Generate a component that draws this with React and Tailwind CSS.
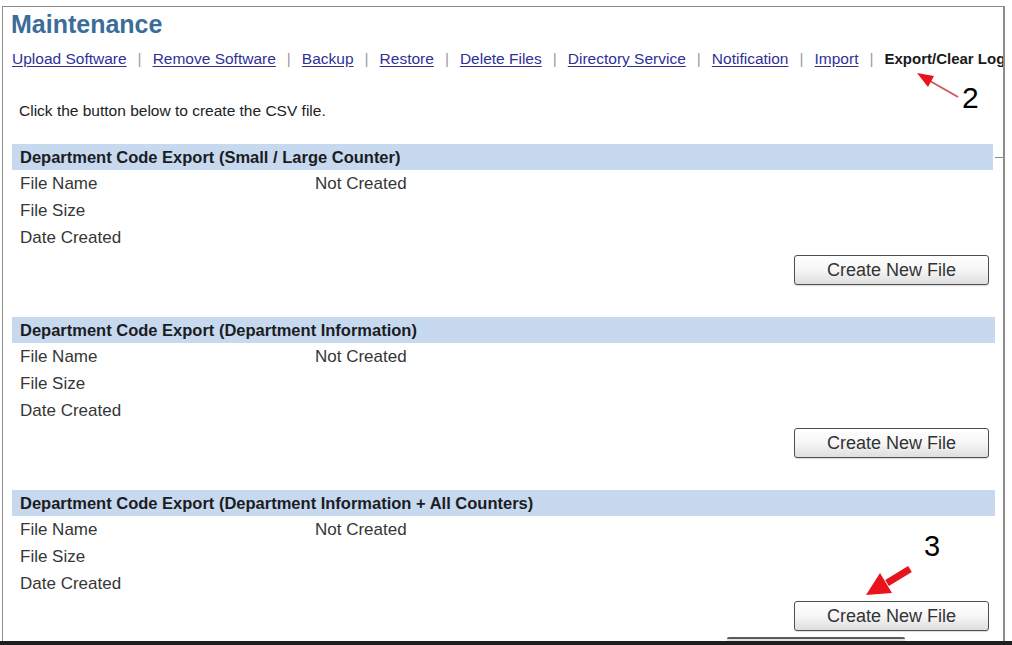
import React from "react";

const navLinks = [
  "Upload Software",
  "Remove Software",
  "Backup",
  "Restore",
  "Delete Files",
  "Directory Service",
  "Notification",
  "Import",
];

const sections = [
  { title: "Department Code Export (Small / Large Counter)", tick: true },
  { title: "Department Code Export (Department Information)" },
  { title: "Department Code Export (Department Information + All Counters)" },
];

const rows = [
  { label: "File Name", value: "Not Created" },
  { label: "File Size", value: "" },
  { label: "Date Created", value: "" },
];

const ExportSection = ({ title, tick, first }) => (
  <div className={first ? "mt-[23px]" : "mt-[32px]"}>
    {/* header bar */}
    <div className="flex items-center">
      <div className="ml-px w-[983px] h-[26px] bg-[#c6d9ee] flex items-center pl-[8px] text-[16.5px] font-bold text-[#1c1c24]">
        {title}
      </div>
      {tick && <div className="ml-[2px] w-[8px] h-px bg-[#8a8a8a]" />}
    </div>

    {rows.map((row) => (
      <div
        key={row.label}
        className="flex h-[27px] leading-[27px] text-[17px] text-[#363636] pl-[9px]"
      >
        <span className="w-[295px]">{row.label}</span>
        <span>{row.value}</span>
      </div>
    ))}

    <div className="flex justify-end w-[978px] mt-[4px]">
      <button className="w-[195px] h-[30px] border border-[#505050] rounded-[3px] bg-linear-to-b from-white via-[#f6f6f6] to-[#dedede] text-[18px] text-[#333] shadow-[0_1px_1px_rgba(0,0,0,0.15)]">
        Create New File
      </button>
    </div>
  </div>
);

export default function App() {
  return (
    <div className="relative w-[1012px] h-[645px] bg-white overflow-hidden font-['Liberation_Sans',Arial,sans-serif]">
      {/* framed page */}
      <div className="ml-[2px] mt-[6px] w-[1003px] h-[635px] border-t border-l border-r-2 border-[#8c8c8c] overflow-hidden pl-[8px]">
        <h1 className="mt-[2px] text-[25px] leading-[30px] font-bold text-[#3a6d98]">
          Maintenance
        </h1>

        <div className="mt-[10px] flex items-center whitespace-nowrap h-[20px] leading-[20px] ml-px">
          {navLinks.map((link) => (
            <React.Fragment key={link}>
              <a href="#" className="text-[15.5px] text-[#2f3196] underline underline-offset-2">
                {link}
              </a>
              <span className="mx-[11px] text-[15.5px] text-[#9a9a9a]">|</span>
            </React.Fragment>
          ))}
          <span className="text-[15px] font-bold text-[#1a1a1a]">Export/Clear Log</span>
        </div>

        <p className="mt-[32px] ml-[8px] text-[15.5px] leading-[20px] text-[#222]">
          Click the button below to create the CSV file.
        </p>

        {sections.map((s, i) => (
          <ExportSection key={s.title} title={s.title} tick={s.tick} first={i === 0} />
        ))}

        {/* top edge of the next, cut-off control */}
        <div className="mt-[6px] ml-[716px] w-[178px] h-[4px] border-t-2 border-[#5a5a5a] bg-[#e4e4e4] rounded-t-[2px]" />
      </div>
      <div className="h-[4px] bg-[#1e1e1e]" />

      {/* annotation overlay */}
      <svg className="absolute inset-0 pointer-events-none" width="1012" height="645">
        <line x1="930" y1="81" x2="958" y2="97" stroke="#d05a5a" strokeWidth="2" />
        <polygon points="917,73 934,76 928,87" fill="#e8141c" />
        <line x1="910" y1="569" x2="887" y2="583" stroke="#e8141c" strokeWidth="7" />
        <polygon points="866,595 892,593 880,573" fill="#e8141c" />
      </svg>
      <div className="absolute left-[962px] top-[83px] text-[30px] leading-[30px] text-black">
        2
      </div>
      <div className="absolute left-[924px] top-[532px] text-[29px] leading-[29px] text-black">
        3
      </div>
    </div>
  );
}
